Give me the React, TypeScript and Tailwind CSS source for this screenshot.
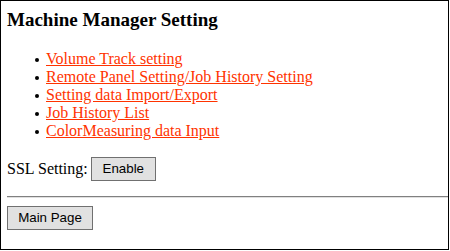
const links = [
  "Volume Track setting",
  "Remote Panel Setting/Job History Setting",
  "Setting data Import/Export",
  "Job History List",
  "ColorMeasuring data Input",
];

export default function App() {
  return (
    <div className="w-[449px] h-[250px] border border-black bg-white font-['Liberation_Serif',serif] text-black">
      <div className="pl-[6px] pt-[8px]">
        <h3 className="text-[19px] font-bold leading-[22px]">
          Machine Manager Setting
        </h3>

        <ul className="mt-[19px] ml-[28px] text-[16px] leading-[18px]">
          {links.map((label) => (
            <li key={label} className="flex items-center">
              <span className="mr-[7px] mt-[1px] h-[4px] w-[4px] rounded-full bg-black" />
              <a href="#" className="text-[#ff3300] underline">
                {label}
              </a>
            </li>
          ))}
        </ul>

        <div className="mt-[17px] flex items-center text-[16px]">
          <span>SSL Setting:</span>
          <button className="ml-[3px] h-[24px] w-[65px] border border-[#707070] bg-[#e1e1e1] font-['Liberation_Sans',sans-serif] text-[13.33px] text-black">
            Enable
          </button>
        </div>
      </div>

      <div className="mt-[15px] ml-[6px] border-t border-t-[#808080] border-b border-b-[#e0e0e0]" />

      <div className="pl-[6px] pt-[7px]">
        <button className="h-[24px] w-[86px] border border-[#707070] bg-[#e1e1e1] font-['Liberation_Sans',sans-serif] text-[13.33px] text-black">
          Main Page
        </button>
      </div>
    </div>
  );
}
